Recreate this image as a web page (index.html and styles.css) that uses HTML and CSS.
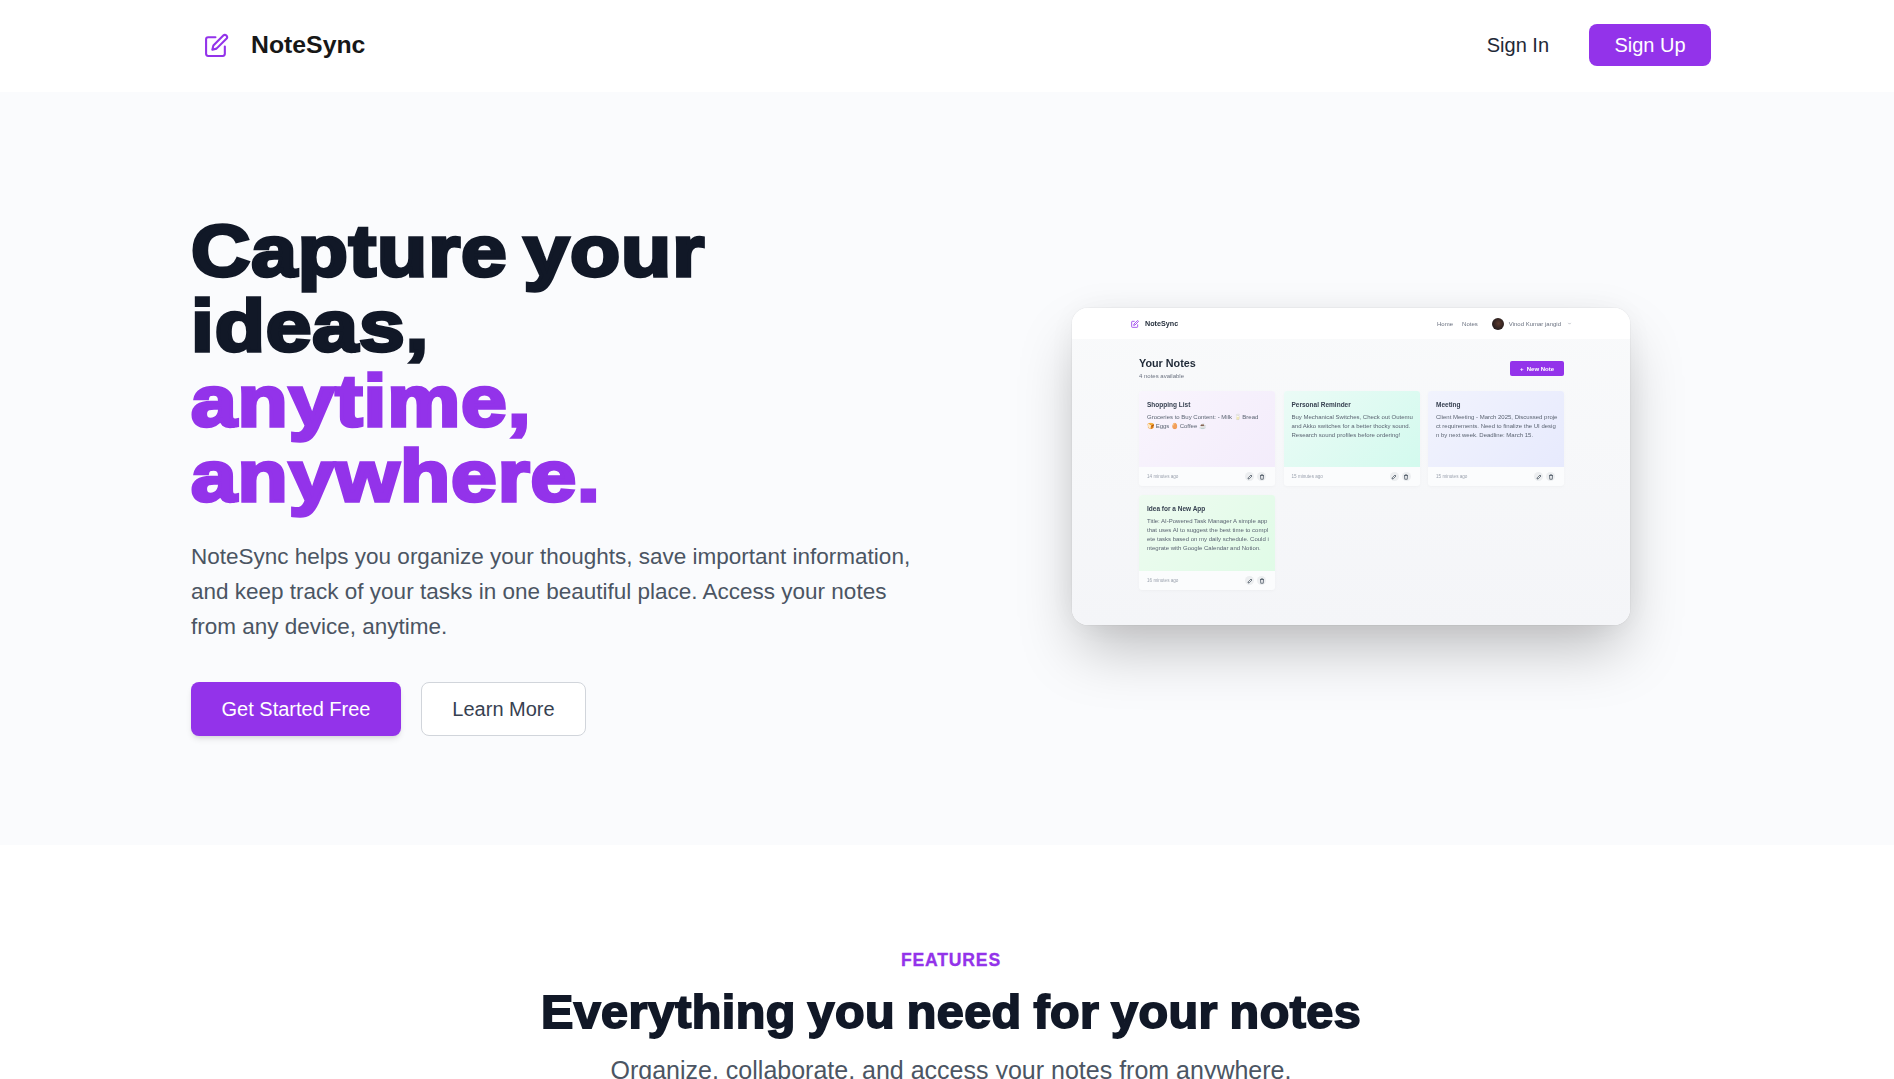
FILE: index.html
```html
<!DOCTYPE html>
<html>
<head>
	<title>NoteSync</title>
	<link rel="stylesheet" href="styles.css">
</head>
<body>

<nav class="topbar">
	<div class="topbar-inner">
		<a class="brand" href="#">
			<svg class="brand-icon" viewBox="0 0 24 24"><path d="M11 4H4a2 2 0 0 0-2 2v14a2 2 0 0 0 2 2h14a2 2 0 0 0 2-2v-7"/><path d="M18.5 2.5a2.12 2.12 0 0 1 3 3L12 15l-4 1 1-4 9.5-9.5z"/></svg>
			<span>NoteSync</span>
		</a>
		<div class="topbar-links">
			<a class="signin" href="#">Sign In</a>
			<a class="signup" href="#">Sign Up</a>
		</div>
	</div>
</nav>

<section class="hero">
	<div class="hero-copy">
		<h1>Capture your ideas, <em>anytime, anywhere.</em></h1>
		<p>NoteSync helps you organize your thoughts, save important information, and keep track of your tasks in one beautiful place. Access your notes from any device, anytime.</p>
		<div class="hero-buttons">
			<a class="btn btn-primary" href="#">Get Started Free</a>
			<a class="btn btn-outline" href="#">Learn More</a>
		</div>
	</div>

	<div class="shot">
		<div class="shot-nav">
			<div class="shot-brand">
				<svg viewBox="0 0 24 24"><path d="M11 4H4a2 2 0 0 0-2 2v14a2 2 0 0 0 2 2h14a2 2 0 0 0 2-2v-7"/><path d="M18.5 2.5a2.12 2.12 0 0 1 3 3L12 15l-4 1 1-4 9.5-9.5z"/></svg>
				<span>NoteSync</span>
			</div>
			<div class="shot-links">
				<span>Home</span>
				<span>Notes</span>
				<i class="shot-avatar"></i>
				<span>Vinod Kumar jangid</span>
				<svg class="shot-caret" viewBox="0 0 24 24"><path d="M6 9l6 6 6-6"/></svg>
			</div>
		</div>
		<div class="shot-body">
			<div class="shot-head">
				<div>
					<div class="shot-title">Your Notes</div>
					<div class="shot-count">4 notes available</div>
				</div>
				<div class="shot-new">+&nbsp; New Note</div>
			</div>
			<div class="shot-grid">
				<div class="note">
					<div class="note-main note-purple">
						<b>Shopping List</b>
						<p>Groceries to Buy Content: - Milk 🥛 Bread<br>🍞 Eggs 🥚 Coffee ☕</p>
					</div>
					<div class="note-foot">
						<span>14 minutes ago</span>
						<div class="note-tools">
							<i><svg viewBox="0 0 24 24"><path d="M4 20l1-5L16 4l4 4L9 19z"/></svg></i>
							<i><svg viewBox="0 0 24 24"><path d="M4 6h16M9 6V3h6v3M6 6l1 15h10l1-15"/></svg></i>
						</div>
					</div>
				</div>
				<div class="note">
					<div class="note-main note-teal">
						<b>Personal Reminder</b>
						<p>Buy Mechanical Switches, Check out Outemu<br>and Akko switches for a better thocky sound.<br>Research sound profiles before ordering!</p>
					</div>
					<div class="note-foot">
						<span>15 minutes ago</span>
						<div class="note-tools">
							<i><svg viewBox="0 0 24 24"><path d="M4 20l1-5L16 4l4 4L9 19z"/></svg></i>
							<i><svg viewBox="0 0 24 24"><path d="M4 6h16M9 6V3h6v3M6 6l1 15h10l1-15"/></svg></i>
						</div>
					</div>
				</div>
				<div class="note">
					<div class="note-main note-blue">
						<b>Meeting</b>
						<p>Client Meeting - March 2025, Discussed proje<br>ct requirements. Need to finalize the UI desig<br>n by next week. Deadline: March 15.</p>
					</div>
					<div class="note-foot">
						<span>15 minutes ago</span>
						<div class="note-tools">
							<i><svg viewBox="0 0 24 24"><path d="M4 20l1-5L16 4l4 4L9 19z"/></svg></i>
							<i><svg viewBox="0 0 24 24"><path d="M4 6h16M9 6V3h6v3M6 6l1 15h10l1-15"/></svg></i>
						</div>
					</div>
				</div>
				<div class="note">
					<div class="note-main note-green">
						<b>Idea for a New App</b>
						<p>Title: AI-Powered Task Manager A simple app<br>that uses AI to suggest the best time to compl<br>ete tasks based on my daily schedule. Could i<br>ntegrate with Google Calendar and Notion.</p>
					</div>
					<div class="note-foot">
						<span>16 minutes ago</span>
						<div class="note-tools">
							<i><svg viewBox="0 0 24 24"><path d="M4 20l1-5L16 4l4 4L9 19z"/></svg></i>
							<i><svg viewBox="0 0 24 24"><path d="M4 6h16M9 6V3h6v3M6 6l1 15h10l1-15"/></svg></i>
						</div>
					</div>
				</div>
			</div>
		</div>
	</div>
</section>

<section class="features">
	<div class="features-label">FEATURES</div>
	<h2>Everything you need for your notes</h2>
	<p>Organize, collaborate, and access your notes from anywhere.</p>
</section>

</body>
</html>
```

FILE: styles.css
```css
* {
	box-sizing: border-box;
}
html, body {
	height: 1079px;
	overflow: hidden;
}
body {
	margin: 0;
	font-family: "Liberation Sans", Arial, sans-serif;
	color: #111827;
	background: #fff;
}
a {
	text-decoration: none;
}

/* top bar */
.topbar {
	height: 92px;
	background: #fff;
}
.topbar-inner {
	height: 90px;
	margin: 0 183px 0 190px;
	padding: 0 0 0 14px;
	display: flex;
	align-items: center;
	justify-content: space-between;
}
.brand {
	display: flex;
	align-items: center;
	gap: 22px;
	font-size: 24.8px;
	font-weight: 700;
	color: #171717;
}
.brand-icon {
	width: 25px;
	height: 25px;
	fill: none;
	stroke: #9333ea;
	stroke-width: 2;
	stroke-linecap: round;
	stroke-linejoin: round;
}
.topbar-links {
	display: flex;
	align-items: center;
	gap: 40px;
	font-size: 20px;
}
.signin {
	color: #1f2937;
}
.signup {
	width: 122px;
	height: 42px;
	display: flex;
	align-items: center;
	justify-content: center;
	border-radius: 8px;
	background: #9333ea;
	color: #fff;
}

/* hero */
.hero {
	height: 753px;
	padding: 0 182px 0 191px;
	display: flex;
	justify-content: space-between;
	align-items: center;
	background: #fafbfd;
}
.hero-copy {
	width: 730px;
	padding-top: 12px;
}
h1 {
	margin: 0 0 26px;
	width: 560px;
	font-size: 73px;
	line-height: 75px;
	font-weight: 800;
	letter-spacing: .8px;
	word-spacing: -7px;
	color: #111827;
	-webkit-text-stroke: 3.4px currentColor;
	transform: scaleX(1.125);
	transform-origin: left center;
}
h1 em {
	display: block;
	font-style: normal;
	color: #9333ea;
}
.hero-copy p {
	margin: 0 0 38px;
	font-size: 22.5px;
	line-height: 35px;
	color: #4b5563;
}
.hero-buttons {
	display: flex;
	gap: 20px;
}
.btn {
	height: 54px;
	display: flex;
	align-items: center;
	justify-content: center;
	border-radius: 8px;
	font-size: 20px;
}
.btn-primary {
	width: 210px;
	background: #9333ea;
	color: #fff;
	box-shadow: 0 4px 6px -1px rgba(0,0,0,.1), 0 2px 4px -2px rgba(0,0,0,.1);
}
.btn-outline {
	width: 165px;
	background: #fff;
	border: 1px solid #d1d5db;
	color: #374151;
}

/* app screenshot in the hero */
.shot {
	width: 558px;
	height: 317px;
	margin-right: 82px;
	margin-top: -4px;
	border-radius: 16px;
	overflow: hidden;
	background: linear-gradient(#f9fafb, #f4f5f8);
	box-shadow: 0 30px 60px -8px rgba(0,0,0,.25), 0 0 36px rgba(0,0,0,.05), 0 0 0 1px rgba(0,0,0,.03);
	filter: blur(.4px);
}
.shot-nav {
	height: 31px;
	padding: 0 58px 0 59px;
	display: flex;
	justify-content: space-between;
	align-items: center;
	background: #fff;
	font-size: 6px;
	color: #6b7280;
}
.shot-brand {
	display: flex;
	align-items: center;
	gap: 6px;
	font-weight: 700;
	font-size: 7.2px;
	color: #1f2937;
}
.shot-brand svg {
	width: 8px;
	height: 8px;
	fill: none;
	stroke: #9333ea;
	stroke-width: 2.4;
}
.shot-links {
	display: flex;
	align-items: center;
	gap: 9px;
}
.shot-avatar {
	width: 12px;
	height: 12px;
	border-radius: 50%;
	margin: 0 -4px 0 5px;
	background: radial-gradient(circle at 55% 45%, #5b3a2e, #241c1c 70%);
}
.shot-caret {
	width: 5px;
	height: 5px;
	margin-left: -3px;
	fill: none;
	stroke: #6b7280;
	stroke-width: 2;
}
.shot-body {
	padding: 17px 66px 0 67px;
}
.shot-head {
	display: flex;
	justify-content: space-between;
	align-items: flex-start;
	margin-bottom: 10px;
}
.shot-title {
	font-size: 10.8px;
	font-weight: 700;
	color: #1f2937;
	line-height: 14px;
}
.shot-count {
	font-size: 6px;
	color: #6b7280;
	line-height: 12px;
}
.shot-new {
	width: 54px;
	height: 15px;
	margin-top: 5px;
	display: flex;
	align-items: center;
	justify-content: center;
	border-radius: 2px;
	background: #9333ea;
	color: #fff;
	font-size: 6px;
	font-weight: 700;
}
.shot-grid {
	display: grid;
	grid-template-columns: repeat(3, 136px);
	gap: 9px 8.5px;
	margin-top: -1px;
}
.note {
	height: 95px;
	border-radius: 3px;
	background: #fbfcfd;
	box-shadow: 0 1px 3px rgba(0,0,0,.03);
	overflow: hidden;
}
.note-main {
	height: 76px;
	padding: 9px 8px 0;
}
.note-main b {
	display: block;
	font-size: 6.5px;
	line-height: 9px;
	color: #374151;
	margin-bottom: 4px;
}
.note-main p {
	margin: 0;
	font-size: 6px;
	line-height: 9px;
	color: #5b6472;
	white-space: nowrap;
}
.note-purple {
	background: linear-gradient(135deg, #f9f5fd, #f3ecfb);
}
.note-teal {
	background: linear-gradient(135deg, #ebfbf6, #d3faee);
}
.note-blue {
	background: linear-gradient(135deg, #f1f3fd, #e7eafd);
}
.note-green {
	background: linear-gradient(135deg, #eefbf0, #e0fbe7);
}
.note-foot {
	height: 19px;
	padding: 0 9px 0 8px;
	display: flex;
	align-items: center;
	justify-content: space-between;
	font-size: 4.6px;
	color: #9ca3af;
}
.note-tools {
	display: flex;
	gap: 3px;
}
.note-tools i {
	width: 9px;
	height: 9px;
	padding: 1.5px;
	border-radius: 50%;
	background: #eceef0;
	display: flex;
}
.note-tools svg {
	fill: none;
	stroke: #4b5563;
	stroke-width: 3;
}

/* features */
.features {
	padding: 103px 182px 0 190px;
	text-align: center;
	background: #fff;
}
.features-label {
	font-size: 17.6px;
	font-weight: 700;
	letter-spacing: .8px;
	color: #9333ea;
	line-height: 24px;
	-webkit-text-stroke: .3px currentColor;
}
h2 {
	margin: 16px 0 0;
	font-size: 46px;
	line-height: 48px;
	font-weight: 800;
	letter-spacing: .4px;
	word-spacing: -2px;
	color: #111827;
	-webkit-text-stroke: 1.8px currentColor;
	transform: scaleX(1.054);
}
.features p {
	margin: 20px 0 0;
	font-size: 25px;
	line-height: 28px;
	color: #4b5563;
}
```
